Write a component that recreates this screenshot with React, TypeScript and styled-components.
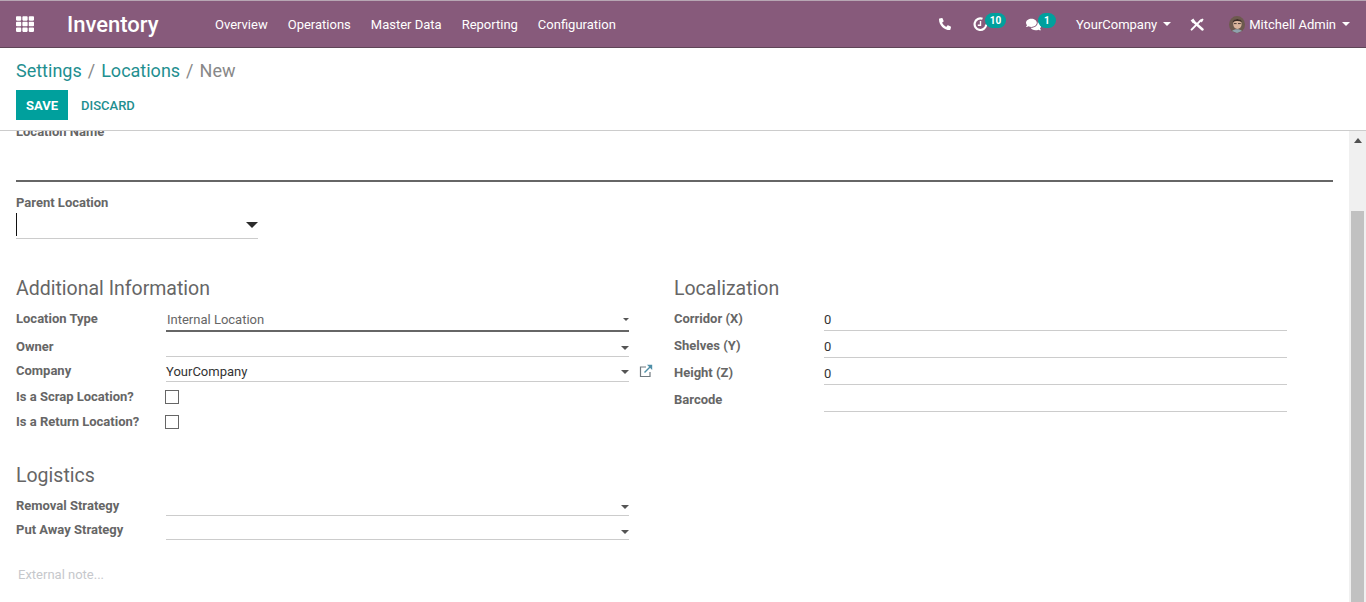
import React from 'react'
import styled, { createGlobalStyle } from 'styled-components'
import { FaPhoneAlt, FaComments, FaTh } from 'react-icons/fa'

const GlobalStyle = createGlobalStyle`
  html, body { margin: 0; height: 100%; overflow: hidden; }
  body { font-family: Roboto, "Noto Sans", sans-serif; font-size: 13px; color: #666; background: #fff; }
  * { box-sizing: border-box; }
`

const Page = styled.div`
  display: flex;
  flex-direction: column;
  height: 602px;
`

const Navbar = styled.header`
  display: flex;
  align-items: center;
  height: 48px;
  flex: none;
  padding: 0 16px;
  background: #875a7b;
  border-top: 1px solid #b7a6b3;
  border-bottom: 1px solid #5f4557;
  color: #fff;
`

const AppsButton = styled.span`
  display: flex;
  width: 51px;
  font-size: 18px;
`

const Brand = styled.span`
  width: 148px;
  padding-top: 2px;
  font-size: 22px;
  font-weight: 500;
  line-height: 26px;
`

const Menu = styled.nav`
  display: flex;
  gap: 20px;
  flex: 1;
`

const MenuItem = styled.span`
  font-size: 13px;
  color: #fff;
`

const Systray = styled.div`
  display: flex;
  align-items: center;
  height: 100%;
`

const TrayIcon = styled.span<{ $w: number; $pad?: number }>`
  position: relative;
  display: flex;
  align-items: center;
  width: ${p => p.$w}px;
  padding-left: ${p => p.$pad ?? 0}px;
  font-size: 12px;
`

const Badge = styled.span<{ $w: number; $left: number }>`
  position: absolute;
  top: -4px;
  left: ${p => p.$left}px;
  width: ${p => p.$w}px;
  height: 15px;
  border-radius: 8px;
  background: #00a09d;
  color: #fff;
  font-size: 10px;
  font-weight: 700;
  line-height: 15px;
  text-align: center;
`

const TrayText = styled.span`
  display: flex;
  align-items: center;
  gap: 6px;
  font-size: 13px;
`

const UserName = styled.span`
  margin-left: -2px;
`

const Caret = styled.span`
  width: 0;
  height: 0;
  border-left: 4px solid transparent;
  border-right: 4px solid transparent;
  border-top: 4px solid currentColor;
`

const ControlPanel = styled.section`
  flex: none;
  height: 83px;
  padding: 10px 16px 0;
  border-bottom: 1px solid #ccc;
`

const Breadcrumb = styled.div`
  display: flex;
  gap: 6px;
  font-size: 18px;
  line-height: 26px;
  color: #888;
`

const Crumb = styled.span`
  color: #1f8f90;
`

const Actions = styled.div`
  display: flex;
  align-items: center;
  gap: 13px;
  margin-top: 6px;
`

const SaveButton = styled.button`
  width: 52px;
  height: 30px;
  padding: 0;
  border: 0;
  background: #00a09d;
  color: #fff;
  font: 700 13px Roboto, sans-serif;
`

const DiscardButton = styled.button`
  padding: 0;
  border: 0;
  background: none;
  color: #1f8f90;
  font: 500 13px Roboto, sans-serif;
`

const Body = styled.div`
  flex: 1;
  display: flex;
  min-height: 0;
`

const Sheet = styled.main`
  flex: 1;
  padding: 0 16px;
  overflow: hidden;
`

const Scrollbar = styled.div`
  flex: none;
  display: flex;
  flex-direction: column;
  align-items: center;
  width: 17px;
  background: #f0f0f0;
`

const ScrollArrow = styled.span`
  width: 0;
  height: 0;
  margin: 7px 0 0;
  border-left: 4px solid transparent;
  border-right: 4px solid transparent;
  border-bottom: 5px solid #505050;
`

const ScrollThumb = styled.span`
  width: 13px;
  flex: 1;
  margin-top: 68px;
  background: #c1c1c1;
`

const Label = styled.label`
  display: block;
  font-size: 13px;
  font-weight: 700;
  line-height: 16px;
  color: #666;
`

const TitleLabel = styled(Label)`
  margin-top: -7px;
`

const NameInput = styled.div`
  height: 42px;
  border-bottom: 2px solid #666;
`

const ParentLabel = styled(Label)`
  margin-top: 13px;
`

const ParentField = styled.div`
  position: relative;
  width: 242px;
  height: 27px;
  margin-top: 1px;
  border-bottom: 1px solid #ccc;
`

const TextCursor = styled.span`
  position: absolute;
  left: 0;
  top: 1px;
  width: 1px;
  height: 23px;
  background: #111;
`

const BigCaret = styled.span`
  position: absolute;
  right: 0;
  top: 10px;
  border-left: 6px solid transparent;
  border-right: 6px solid transparent;
  border-top: 6px solid #2b2b2b;
`

const Columns = styled.div`
  display: grid;
  grid-template-columns: 658px 1fr;
  margin-top: 38px;
`

const GroupTitle = styled.h2<{ $gap: number }>`
  margin: 0 0 ${p => p.$gap}px;
  font-size: 19.5px;
  font-weight: 400;
  line-height: 24px;
  color: #666;
`

const LogisticsTitle = styled(GroupTitle)`
  margin-top: 29px;
`

const Row = styled.div<{ $h: number }>`
  display: grid;
  grid-template-columns: 150px 463px auto;
  height: ${p => p.$h}px;
`

const RowLabel = styled(Label)<{ $top: number }>`
  padding-top: ${p => p.$top}px;
`

const Field = styled.div<{ $focus?: boolean; $top?: number }>`
  display: flex;
  align-items: center;
  justify-content: space-between;
  padding-top: ${p => p.$top ?? 2}px;
  border-bottom: ${p => (p.$focus ? '2px solid #666' : '1px solid #ccc')};
  font-size: 13px;
  line-height: 16px;
  color: #333;
`

const FieldValue = styled.span<{ $muted?: boolean; $inset?: boolean }>`
  color: ${p => (p.$muted ? '#666' : '#333')};
  padding-left: ${p => (p.$inset ? 1 : 0)}px;
`

const SelectCaret = styled(Caret)<{ $small?: boolean }>`
  border-left-width: ${p => (p.$small ? 3 : 4)}px;
  border-right-width: ${p => (p.$small ? 3 : 4)}px;
  border-top-width: ${p => (p.$small ? 3 : 4)}px;
  border-top-color: #555;
`

const OpenLink = styled.span`
  display: flex;
  align-items: flex-start;
  padding: 7px 0 0 10px;
`

const CheckBox = styled.span<{ $top: number }>`
  display: block;
  width: 14px;
  height: 14px;
  margin: ${p => p.$top}px 0 0 -1px;
  border: 1px solid #666;
  background: #fff;
`

const Note = styled.div`
  margin: 27px 0 0 2px;
  font-size: 13px;
  line-height: 16px;
  color: #c6c8cc;
`

const ClockIcon = () => (
  <svg width="15" height="15" viewBox="0 0 15 15" fill="none" stroke="#fff">
    <path d="M9.5 1.8A5.8 5.8 0 1 0 13.2 7.5" strokeWidth="2.2" />
    <path d="M7.5 4V8.2H4.8" strokeWidth="1.4" />
  </svg>
)

const ToolsIcon = () => (
  <svg width="14" height="13" viewBox="0 0 14 13" fill="none" stroke="#fff">
    <path d="M3.5 3.5L12.5 11.5" strokeWidth="2.4" strokeLinecap="round" />
    <path d="M0.6 2.6L3 5.2L5.2 3.6L3.4 0.6" fill="#fff" stroke="none" />
    <path d="M1.6 11.6L10.5 2.6" strokeWidth="2" strokeLinecap="round" />
    <path d="M9.5 2.2L12.4 0.4L13.6 1.6L11.8 4.4Z" fill="#fff" stroke="none" />
  </svg>
)

const AvatarIcon = () => (
  <svg width="16" height="17" viewBox="0 0 16 17">
    <ellipse cx="8" cy="8.5" rx="8" ry="8.5" fill="#6d5a4e" />
    <ellipse cx="8.4" cy="8" rx="4.2" ry="5" fill="#d9b49c" />
    <path d="M3.6 6.5C4 1.8 12.4 1.8 12.8 6.2C10 4.6 6.4 4.8 3.6 6.5Z" fill="#3a2c26" />
    <path d="M5 7.6H7.6M9 7.6H11.8" stroke="#4a3a34" strokeWidth="1" />
    <path d="M3 15C5 12.6 11 12.6 13 15L8 17Z" fill="#8fa2ae" />
  </svg>
)

const ExternalIcon = () => (
  <svg width="14" height="14" viewBox="0 0 14 14" fill="none">
    <path d="M7 3H1.5V12.5H11V8" stroke="#707a80" strokeWidth="1.2" />
    <path d="M5.5 8.5L12 2" stroke="#4f8fa8" strokeWidth="1.4" />
    <path d="M8 .8H13.2V6Z" fill="#4f8fa8" />
  </svg>
)

const menu = ['Overview', 'Operations', 'Master Data', 'Reporting', 'Configuration']
const corridor = [
  ['Corridor (X)', '0'],
  ['Shelves (Y)', '0'],
  ['Height (Z)', '0'],
  ['Barcode', ''],
]

export default function App() {
  return (
    <Page>
      <GlobalStyle />
      <Navbar>
        <AppsButton><FaTh /></AppsButton>
        <Brand>Inventory</Brand>
        <Menu>
          {menu.map(item => <MenuItem key={item}>{item}</MenuItem>)}
        </Menu>
        <Systray>
          <TrayIcon $w={34}><FaPhoneAlt /></TrayIcon>
          <TrayIcon $w={53}><ClockIcon /><Badge $w={21} $left={12}>10</Badge></TrayIcon>
          <TrayIcon $w={50}><FaComments size={15} /><Badge $w={18} $left={12}>1</Badge></TrayIcon>
          <TrayText>YourCompany <Caret /></TrayText>
          <TrayIcon $w={58} $pad={19}><ToolsIcon /></TrayIcon>
          <TrayText><AvatarIcon /><UserName>Mitchell Admin</UserName> <Caret /></TrayText>
        </Systray>
      </Navbar>

      <ControlPanel>
        <Breadcrumb>
          <Crumb>Settings</Crumb>/<Crumb>Locations</Crumb>/<span>New</span>
        </Breadcrumb>
        <Actions>
          <SaveButton>SAVE</SaveButton>
          <DiscardButton>DISCARD</DiscardButton>
        </Actions>
      </ControlPanel>

      <Body>
        <Sheet>
          <TitleLabel>Location Name</TitleLabel>
          <NameInput />
          <ParentLabel>Parent Location</ParentLabel>
          <ParentField><TextCursor /><BigCaret /></ParentField>

          <Columns>
            <div>
              <GroupTitle $gap={6}>Additional Information</GroupTitle>
              <Row $h={25}>
                <RowLabel $top={4}>Location Type</RowLabel>
                <Field $focus>
                  <FieldValue $muted $inset>Internal Location</FieldValue>
                  <SelectCaret $small />
                </Field>
              </Row>
              <Row $h={25}>
                <RowLabel $top={7}>Owner</RowLabel>
                <Field $top={8}><span /><SelectCaret /></Field>
              </Row>
              <Row $h={25}>
                <RowLabel $top={6}>Company</RowLabel>
                <Field $top={6}><FieldValue>YourCompany</FieldValue><SelectCaret /></Field>
                <OpenLink><ExternalIcon /></OpenLink>
              </Row>
              <Row $h={28}>
                <RowLabel $top={7}>Is a Scrap Location?</RowLabel>
                <CheckBox $top={8} />
              </Row>
              <Row $h={25}>
                <RowLabel $top={4}>Is a Return Location?</RowLabel>
                <CheckBox $top={5} />
              </Row>
              <LogisticsTitle $gap={3}>Logistics</LogisticsTitle>
              <Row $h={25}>
                <RowLabel $top={7}>Removal Strategy</RowLabel>
                <Field $top={8}><span /><SelectCaret /></Field>
              </Row>
              <Row $h={24}>
                <RowLabel $top={6}>Put Away Strategy</RowLabel>
                <Field $top={8}><span /><SelectCaret /></Field>
              </Row>
              <Note>External note...</Note>
            </div>
            <div>
              <GroupTitle $gap={3}>Localization</GroupTitle>
              {corridor.map(([label, value]) => (
                <Row $h={27} key={label}>
                  <RowLabel $top={7}>{label}</RowLabel>
                  <Field $top={6}><FieldValue>{value}</FieldValue></Field>
                </Row>
              ))}
            </div>
          </Columns>
        </Sheet>
        <Scrollbar>
          <ScrollArrow />
          <ScrollThumb />
        </Scrollbar>
      </Body>
    </Page>
  )
}
